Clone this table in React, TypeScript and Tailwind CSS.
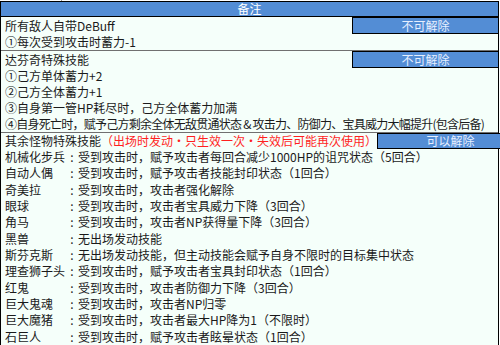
const FONT = { fontFamily: '"Microsoft YaHei", "Noto Sans CJK SC", "Noto Sans", sans-serif' };

const monsters: [string, string][] = [
  ["机械化步兵", "受到攻击时，赋予攻击者每回合减少1000HP的诅咒状态（5回合）"],
  ["自动人偶", "受到攻击时，赋予攻击者技能封印状态（1回合）"],
  ["奇美拉", "受到攻击时，攻击者强化解除"],
  ["眼球", "受到攻击时，攻击者宝具威力下降（3回合）"],
  ["角马", "受到攻击时，攻击者NP获得量下降（3回合）"],
  ["黑兽", "无出场发动技能"],
  ["斯芬克斯", "无出场发动技能，但主动技能会赋予自身不限时的目标集中状态"],
  ["理查狮子头", "受到攻击时，赋予攻击者宝具封印状态（1回合）"],
  ["红鬼", "受到攻击时，攻击者防御力下降（3回合）"],
  ["巨大鬼魂", "受到攻击时，攻击者NP归零"],
  ["巨大魔猪", "受到攻击时，攻击者最大HP降为1（不限时）"],
  ["石巨人", "受到攻击时，赋予攻击者眩晕状态（1回合）"],
];

function Badge({ children }: { children: string }) {
  return (
    <div className="flex w-[146px] shrink-0 items-center justify-center border border-r-0 border-black bg-[#538dd5] text-[12px] text-[#e6efff]">
      {children}
    </div>
  );
}

function Line({ children, className = "" }: { children: React.ReactNode; className?: string }) {
  return <div className={`h-[16px] whitespace-nowrap pl-[4px] leading-[16px] ${className}`}>{children}</div>;
}

export default function App() {
  return (
    <div className="h-[345px] w-[500px] overflow-hidden bg-white text-[12px] text-[#1a1a1a]" style={FONT}>
      <div className="flex h-[1px]">
        <div className="w-[62px] border-r border-[#9a9a9a]" />
      </div>
      <div className="w-[499px] border border-black bg-[#f5fffa]">
        <div className="h-[15px] border-b border-black bg-[#538dd5] text-center leading-[14px] text-white">备注</div>

        <div className="border-b border-[#707070]">
          <div className="flex h-[17px]">
            <div className="flex-1 pl-[4px] leading-[17px]">所有敌人自带DeBuff</div>
            <Badge>不可解除</Badge>
          </div>
          <Line className="h-[15px]">①每次受到攻击时蓄力-1</Line>
        </div>

        <div className="border-b border-[#707070]">
          <div className="flex h-[17px]">
            <div className="flex-1 pl-[4px] leading-[17px]">达芬奇特殊技能</div>
            <Badge>不可解除</Badge>
          </div>
          <Line>①己方单体蓄力+2</Line>
          <Line>②己方全体蓄力+1</Line>
          <Line>③自身第一管HP耗尽时，己方全体蓄力加满</Line>
          <Line className="tracking-[-0.75px]">④自身死亡时，赋予己方剩余全体无敌贯通状态 &amp; 攻击力、防御力、宝具威力大幅提升(包含后备)</Line>
        </div>

        <div className="flex h-[16px]">
          <div className="flex-1 whitespace-nowrap pl-[4px] leading-[16px]">
            其余怪物特殊技能<span className="text-[#ff1f1f]">（出场时发动·只生效一次·失效后可能再次使用）</span>
          </div>
          <Badge>可以解除</Badge>
        </div>

        <div className="pb-[2px]">
          {monsters.map(([name, text]) => (
            <div key={name} className="flex h-[16.35px] whitespace-nowrap pl-[4px] leading-[16.35px]">
              <span className="w-[61px] shrink-0">{name}</span>
              <span className="w-[12px] shrink-0 text-center">:</span>
              <span>{text}</span>
            </div>
          ))}
        </div>
      </div>
    </div>
  );
}
